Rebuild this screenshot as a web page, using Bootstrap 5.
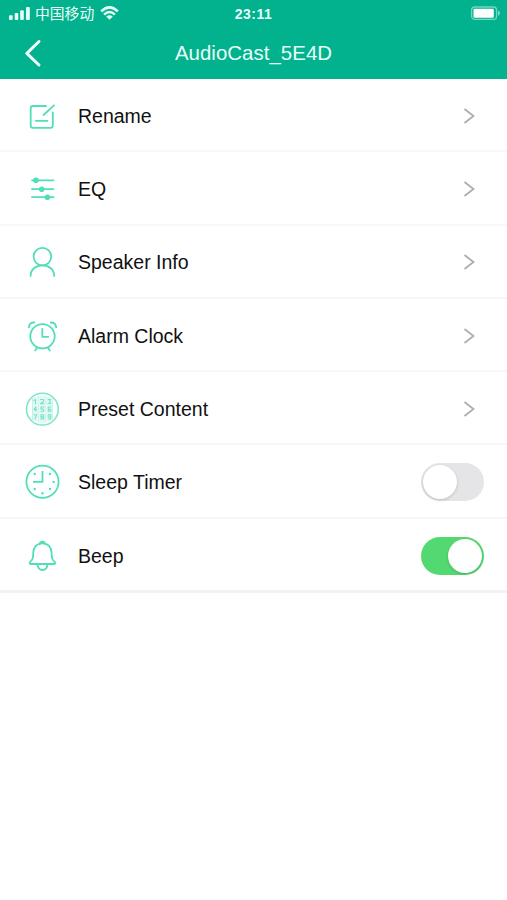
<!DOCTYPE html>
<html lang="en">
<head>
<meta charset="utf-8">
<meta name="viewport" content="width=device-width, initial-scale=1">
<title>AudioCast_5E4D</title>
<link rel="stylesheet" href="https://cdn.jsdelivr.net/npm/bootstrap@5.3.0/dist/css/bootstrap.min.css">
<style>
body{font-family:"Liberation Sans",Arial,sans-serif;background:#fff;color:#111}
.top-area{background:#02b18d;height:79px;color:#e6fff8}
.status{height:27px;font-size:14.5px;line-height:27px}
.carrier{font-family:"Noto Sans CJK SC",sans-serif;font-size:14.8px;line-height:25px;height:27px;margin-left:4px;margin-right:6px}
.clock{font-weight:700;font-size:14px;letter-spacing:.45px;padding-top:1px}
.side{flex:1 1 0}
.title-bar{height:52px}
.title{font-size:20.4px;letter-spacing:.05px;line-height:52px}
.settings{border-bottom:3px solid #f2f2f3}
.setting{height:73.3px;padding:2px 23px 0 22px;border-bottom:2px solid #f7f7f8}
.setting:last-child{height:71.7px;border-bottom:0}
.setting-name{font-size:19.5px;margin-left:16px;line-height:30px}
.glyph{fill:none;stroke:#50dfb9;stroke-width:1.8;stroke-linecap:round;stroke-linejoin:round;flex:none}
.chev{margin-right:9.5px}
.toggle{width:63px;height:38px;border-radius:19px;background:#e5e5e7;padding:2px}
.toggle.on{background:#53d972}
.knob{width:34px;height:34px;border-radius:50%;background:#fff;box-shadow:0 1px 3px rgba(0,0,0,.18)}
</style>
<script src="https://cdn.jsdelivr.net/npm/bootstrap@5.3.0/dist/js/bootstrap.bundle.min.js"></script>
</head>
<body>
<header class="top-area">
  <div class="status d-flex align-items-center">
    <div class="side d-flex align-items-center">
      <svg class="ms-2" width="23" height="27" fill="#e6fff8"><rect x="1" y="15.3" width="3.6" height="4.6" rx="1"/><rect x="6.7" y="13" width="3.6" height="6.9" rx="1"/><rect x="12.2" y="10.3" width="3.6" height="9.6" rx="1"/><rect x="18" y="7" width="3.8" height="12.9" rx="1"/></svg>
      <span class="carrier">中国移动</span>
      <svg width="19" height="27" viewBox="0 0 19 27" fill="none" stroke="#e6fff8" stroke-width="2.5"><path d="M1.2 11.3Q9.5 3.4 17.8 11.3M4.1 14.6Q9.5 9.4 14.9 14.6"/><path d="M6.2 16.6Q9.5 13.8 12.8 16.6L9.5 19.8Z" fill="#e6fff8" stroke="none"/></svg>
    </div>
    <span class="clock">23:11</span>
    <div class="side d-flex justify-content-end">
      <svg width="37" height="27"><rect x="1.6" y="7" width="25" height="12.4" rx="3.2" fill="none" stroke="#74d7c0" stroke-width="1.3"/><rect x="3.5" y="8.8" width="20.3" height="8.9" rx="1.3" fill="#fff"/><path d="M28 10.5Q32.3 13.2 28 16Z" fill="#74d7c0"/></svg>
    </div>
  </div>
  <div class="title-bar d-flex">
    <div class="side"><svg width="60" height="52" fill="none" stroke="#f2fffb" stroke-width="3" stroke-linecap="round" stroke-linejoin="round"><path d="M39 14.5 26.8 26.3 39 38"/></svg></div>
    <div class="title">AudioCast_5E4D</div>
    <div class="side"></div>
  </div>
</header>
<main class="settings">
  <div class="setting d-flex align-items-center">
    <svg class="glyph" width="40" height="40"><path d="M24 10H11Q8.7 10 8.7 12.3V29.5Q8.7 31.8 11 31.8H28.5Q30.8 31.8 30.8 29.5V16.5M21.5 19 32 9.3M13.7 24.8H25.5"/></svg>
    <span class="setting-name">Rename</span>
    <svg class="chev ms-auto" width="12" height="18" fill="none" stroke="#aeaeb0" stroke-width="1.8"><path d="M1.5 2 10.5 9 1.5 16"/></svg>
  </div>
  <div class="setting d-flex align-items-center">
    <svg class="glyph" width="40" height="40"><path d="M10 11.3H31.5M10 20.2H31.5M10 28.2H31.5"/><g fill="#50dfb9" stroke="none"><circle cx="13.9" cy="11.3" r="2.8"/><circle cx="19.7" cy="20.2" r="2.8"/><circle cx="25.4" cy="28.2" r="2.8"/></g></svg>
    <span class="setting-name">EQ</span>
    <svg class="chev ms-auto" width="12" height="18" fill="none" stroke="#aeaeb0" stroke-width="1.8"><path d="M1.5 2 10.5 9 1.5 16"/></svg>
  </div>
  <div class="setting d-flex align-items-center">
    <svg class="glyph" width="40" height="40"><circle cx="20.4" cy="14.6" r="8.8"/><path d="M8.6 34C8.6 27.5 13.5 23.4 20.4 23.4S32.2 27.5 32.2 34"/></svg>
    <span class="setting-name">Speaker Info</span>
    <svg class="chev ms-auto" width="12" height="18" fill="none" stroke="#aeaeb0" stroke-width="1.8"><path d="M1.5 2 10.5 9 1.5 16"/></svg>
  </div>
  <div class="setting d-flex align-items-center">
    <svg class="glyph" width="40" height="40"><circle cx="20.5" cy="20.3" r="12.2"/><path d="M20.3 13V20.8H26.3M6.8 11.3Q7.3 6.4 12.2 6.5M34.2 11.3Q33.7 6.4 28.8 6.5M15 31.8 13.2 34.6M26 31.8 27.8 34.6"/></svg>
    <span class="setting-name">Alarm Clock</span>
    <svg class="chev ms-auto" width="12" height="18" fill="none" stroke="#aeaeb0" stroke-width="1.8"><path d="M1.5 2 10.5 9 1.5 16"/></svg>
  </div>
  <div class="setting d-flex align-items-center">
    <svg class="glyph" width="40" height="40"><circle cx="20.4" cy="20.2" r="15.9" stroke="#7be5c9" stroke-width="1.5"/><path fill="#e3faf4" stroke="none" d="M10.5 8H16V32.5H10.5ZM17.5 6.5H23V34H17.5ZM24.5 8H30V32.5H24.5Z"/><path stroke="#c3f3e7" stroke-width="1" d="M10.5 9V31.5M16.7 7V33.5M23.8 7V33.5M30.3 9V31.5"/><path stroke="#76e2c8" stroke-width="1.1" d="M12 11.5 13.5 10.5V14.8M18.5 10.5H21.5V12.5L18.5 14.8H22M26 10.5H28.7L27.3 12.5 28.7 14.5H26M13.8 22V17.8L12 20.8H14.8M22 18H19V20H21.5V22.3H19M28.7 18H26.3V22.3H28.7V20.3H26.5M12 25.8H14.7L13 30M19 25.8H21.7V30H19ZM19 27.9H21.7M28.7 28H26.3V25.8H28.7V30H26.3"/></svg>
    <span class="setting-name">Preset Content</span>
    <svg class="chev ms-auto" width="12" height="18" fill="none" stroke="#aeaeb0" stroke-width="1.8"><path d="M1.5 2 10.5 9 1.5 16"/></svg>
  </div>
  <div class="setting d-flex align-items-center">
    <svg class="glyph" width="40" height="40"><circle cx="20.5" cy="19.8" r="16.1"/><path d="M20.5 9V19.9H11" stroke-linecap="butt"/><g fill="#50dfb9" stroke="none"><circle cx="28" cy="12" r="1.2"/><circle cx="31.6" cy="19.9" r="1.2"/><circle cx="28" cy="27" r="1.2"/><circle cx="20.5" cy="31.2" r="1.2"/><circle cx="12.7" cy="27" r="1.2"/><circle cx="12.7" cy="12" r="1.2"/></g></svg>
    <span class="setting-name">Sleep Timer</span>
    <div class="toggle d-flex align-items-center ms-auto" role="switch" aria-checked="false"><div class="knob"></div></div>
  </div>
  <div class="setting d-flex align-items-center">
    <svg class="glyph" width="40" height="40"><path d="M17.7 8.4Q17.9 5.7 20.4 5.7T23.1 8.4M20.4 7.4C14.5 7.4 11.2 11.6 11.2 17C11.2 22.5 10.5 23.7 8 26.2Q6.9 28 9 28H31.8Q33.9 28 32.8 26.2C30.3 23.7 29.6 22.5 29.6 17C29.6 11.6 26.3 7.4 20.4 7.4ZM15.5 28.3Q16 34 20.5 34T25.5 28.3"/></svg>
    <span class="setting-name">Beep</span>
    <div class="toggle on d-flex align-items-center justify-content-end ms-auto" role="switch" aria-checked="true"><div class="knob"></div></div>
  </div>
</main>
</body>
</html>
